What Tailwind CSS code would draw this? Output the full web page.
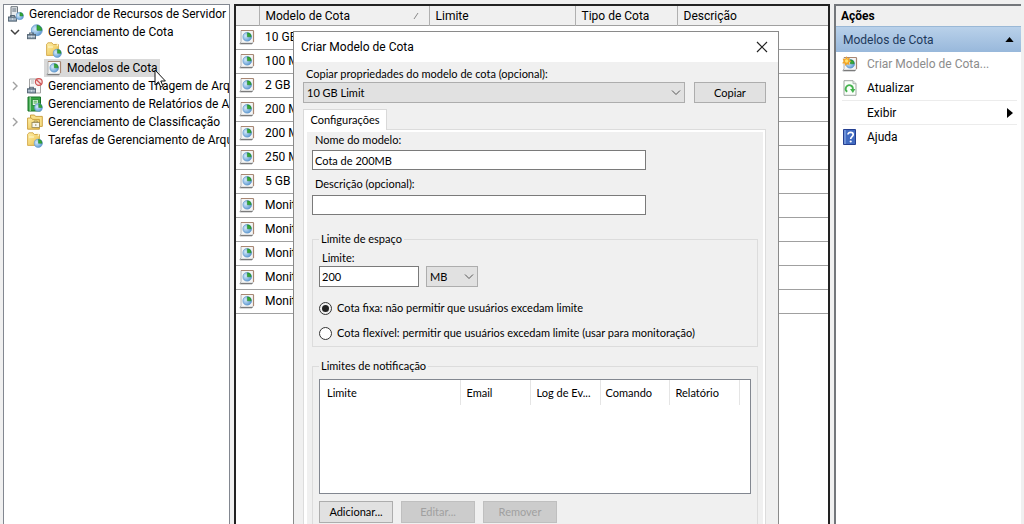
<!DOCTYPE html>
<html lang="pt-BR">
<head>
<meta charset="utf-8">
<title>Gerenciador de Recursos de Servidor de Arquivos</title>
<script src="https://cdn.jsdelivr.net/npm/@tailwindcss/browser@4"></script>
</head>
<body class="bg-[#f0f0f0] text-black">
<svg class="absolute size-0" aria-hidden="true">
  <defs>
    <linearGradient id="folderFill" x1="0" y1="0" x2="1" y2="1"><stop offset="0" stop-color="#fff0a8"/><stop offset="1" stop-color="#e9bd48"/></linearGradient>
    <radialGradient id="discFill" cx=".35" cy=".4" r=".75"><stop offset="0" stop-color="#d5eafb"/><stop offset="1" stop-color="#4d8fce"/></radialGradient>
    <symbol id="pie" viewBox="0 0 10 10">
      <circle cx="5" cy="5" r="4.4" fill="url(#discFill)" stroke="#6a9ccb" stroke-width=".7"/>
      <path d="M5.2 5V1A4 4 0 0 1 9 5Z" fill="#35a836" stroke="#1f8227" stroke-width=".5"/>
    </symbol>
    <symbol id="case" viewBox="0 0 10 8">
      <path d="M3 3V1h4v2" fill="none" stroke="#536575" stroke-width="1.2"/>
      <rect x=".5" y="2.7" width="9" height="4.8" fill="#8296a8" stroke="#50606e"/>
      <path d="M1 5h8M5 4v2" stroke="#dbe3ea" stroke-width=".9"/>
    </symbol>
    <symbol id="folder" viewBox="0 0 16 16">
      <path d="M.6 2.2 2 .8h4l1.3 1.7h5.1v10.9H.6Z" fill="url(#folderFill)" stroke="#d3a746" stroke-width=".9"/>
      <path d="M2 5h5M8.5 1.2h2.8v3" fill="none" stroke="#fff8d5"/>
    </symbol>
    <symbol id="folderPie" viewBox="0 0 16 16">
      <use href="#folder" width="16" height="16"/><use href="#pie" x="6.5" y="6.5" width="9.5" height="9.5"/>
    </symbol>
    <symbol id="template" viewBox="0 0 16 16">
      <path d="M2 1.5h12.5v11L13 15H.8L2 12.5Z" fill="#f4f5f5" stroke="#a9abad" stroke-width=".9"/>
      <path d="M2 1.5h12.5M14.5 2v11" stroke="#a98773" stroke-width="1.2"/>
      <path d="M1.5 14.4h11.8" stroke="#777" stroke-width="1.1"/>
      <use href="#pie" x="3.2" y="2.8" width="10" height="10"/>
    </symbol>
    <symbol id="server" viewBox="0 0 16 16">
      <path d="M3 .7h6.5v11H3Z" fill="#e7eaed" stroke="#6b737a"/>
      <path d="M4.3 3h4M4.3 5h4" stroke="#596675"/>
      <use href="#case" x="0" y="8.5" width="9" height="7.3"/><use href="#pie" x="7.5" y="5.5" width="8.5" height="9"/>
    </symbol>
    <symbol id="quota" viewBox="0 0 16 16">
      <use href="#pie" x="3.5" y="0" width="12.5" height="12.5"/><use href="#case" x="0" y="8" width="9" height="7.5"/>
    </symbol>
    <symbol id="screen" viewBox="0 0 16 16">
      <path d="M2.5 1h9l2 2v12h-11Z" fill="#f7f7f7" stroke="#a3a3a3"/>
      <path d="M4 5h3M4 3h3" stroke="#b7b7b7"/>
      <circle cx="11.8" cy="4" r="3.4" fill="#f8dede" stroke="#cf5555" stroke-width="1.2"/><path d="m9.4 1.7 4.8 4.6" stroke="#cf5555" stroke-width="1.2"/>
      <use href="#case" x="0" y="8.3" width="9" height="7.3"/>
    </symbol>
    <symbol id="report" viewBox="0 0 16 16">
      <path d="M1 1h12.5v14H1Z" fill="#36a644" stroke="#177127"/>
      <path d="M3.2 1v14" stroke="#b6e3b8"/><path d="M5.3 3.5h6v6h-6Z" fill="#e9f8e6" stroke="#187c29" stroke-width=".8"/>
      <path d="M6.6 5.2h3.3M6.6 7h3.3" stroke="#36a644"/>
      <use href="#pie" x="7" y="7" width="9" height="9"/>
    </symbol>
    <symbol id="classify" viewBox="0 0 16 16">
      <path d="M3.5 1h4l1 1.4h6.8v10H3.5Z" fill="#f8df88" stroke="#c79a35" stroke-width=".9"/>
      <path d="M.6 4h3.8l1 1.4h7v9.8H.6Z" fill="url(#folderFill)" stroke="#c79a35" stroke-width=".9"/>
      <rect x="5" y="8.5" width="7.5" height="5" fill="#f8f7ec" stroke="#948552" stroke-width=".8"/>
      <path d="M7 8.5V7h3.3v1.5M8.8 10v2" fill="none" stroke="#948552" stroke-width=".8"/>
    </symbol>
    <symbol id="newTemplate" viewBox="0 0 16 16">
      <use href="#template" width="16" height="16"/>
      <path d="m4.2 0 1.2 2.4L8 1.6 7.2 4l2.2 1.3L7 6.6l.5 2.5L5 8.2 3.4 10 2.7 7.6 0 7.2l1.7-2L.6 2.7l2.6.2Z" fill="#f3a526"/><circle cx="4.6" cy="5" r="1.7" fill="#ffe273"/>
    </symbol>
    <symbol id="refresh" viewBox="0 0 16 16">
      <path d="M2 .7h9l3 3v11.6H2Z" fill="#fafffa" stroke="#9da7a0"/><path d="M11 .7v3h3" fill="#e4e9e4" stroke="#9da7a0" stroke-width=".8"/>
      <path d="M5.2 11.7A3.6 3.6 0 1 1 10.8 9.5" fill="none" stroke="#45b34e" stroke-width="1.8"/><path d="M8 8.9h5.4l-2.5 4Z" fill="#45b34e"/>
    </symbol>
    <symbol id="help" viewBox="0 0 16 16">
      <path d="M1.5.5h12v15h-12Z" fill="#416bc1" stroke="#243f91"/><path d="M3 1v14" stroke="#8eade7" stroke-width="1.2"/>
      <path d="M6 5.6C6 2.6 11.2 2.7 11.2 5.6 11.2 7.8 8.7 7.6 8.7 10" fill="none" stroke="#fff" stroke-width="1.7"/><circle cx="8.7" cy="12.5" r="1.1" fill="#fff"/>
    </symbol>
  </defs>
</svg>

<div class="relative flex h-screen gap-1 overflow-hidden px-[3px] pt-1 font-[Roboto,'Noto_Sans',sans-serif] text-xs leading-[18px]">

  <nav class="w-[227px] shrink-0 overflow-hidden border border-b-0 border-[#828790] bg-white whitespace-nowrap" aria-label="Árvore do console">
    <ul>
      <li class="flex h-[18px] items-center gap-[5px] pl-1"><svg class="size-4 shrink-0"><use href="#server"/></svg><span>Gerenciador de Recursos de Servidor de Arquivos</span></li>
      <li class="flex h-[18px] items-center gap-[5px] pl-[6px]"><svg class="mr-[2px] size-[10px] shrink-0" viewBox="0 0 10 10"><path d="m1 3 4 4 4-4" fill="none" stroke="#404040" stroke-width="1.5"/></svg><svg class="size-4 shrink-0"><use href="#quota"/></svg><span>Gerenciamento de Cota</span></li>
      <li class="flex h-[18px] items-center gap-[5px] pl-[42px]"><svg class="size-4 shrink-0"><use href="#folderPie"/></svg><span>Cotas</span></li>
      <li class="flex h-[18px] pl-10"><span class="flex items-center gap-[5px] bg-[#d9d9d9] pr-[2px] pl-[2px]"><svg class="size-4 shrink-0"><use href="#template"/></svg><span>Modelos de Cota</span></span></li>
      <li class="flex h-[18px] items-center gap-[5px] pl-[6px]"><svg class="mr-[2px] size-[10px] shrink-0" viewBox="0 0 10 10"><path d="m3 1 4 4-4 4" fill="none" stroke="#a0a0a0" stroke-width="1.4"/></svg><svg class="size-4 shrink-0"><use href="#screen"/></svg><span>Gerenciamento de Triagem de Arquivo</span></li>
      <li class="flex h-[18px] items-center gap-[5px] pl-[23px]"><svg class="size-4 shrink-0"><use href="#report"/></svg><span>Gerenciamento de Relatórios de Armazenamento</span></li>
      <li class="flex h-[18px] items-center gap-[5px] pl-[6px]"><svg class="mr-[2px] size-[10px] shrink-0" viewBox="0 0 10 10"><path d="m3 1 4 4-4 4" fill="none" stroke="#a0a0a0" stroke-width="1.4"/></svg><svg class="size-4 shrink-0"><use href="#classify"/></svg><span>Gerenciamento de Classificação</span></li>
      <li class="flex h-[18px] items-center gap-[5px] pl-[23px]"><svg class="size-4 shrink-0"><use href="#folderPie"/></svg><span>Tarefas de Gerenciamento de Arquivos</span></li>
    </ul>
  </nav>

  <main class="min-w-0 flex-1 border-2 border-b-0 border-[#222] bg-white">
    <table class="w-full table-fixed border-collapse text-left whitespace-nowrap">
      <colgroup><col class="w-[23px]"><col class="w-[170px]"><col class="w-[146px]"><col class="w-[102px]"><col></colgroup>
      <thead class="bg-[#f0f0f0] leading-4">
        <tr class="h-[19px] border-b border-[#a0a0a0]">
          <th class="p-0"></th>
          <th class="border-l border-[#b0b0b0] pt-[2px] pr-0 pb-0 pl-[6px] font-normal"><span class="flex items-center justify-between pr-[10px]">Modelo de Cota <svg class="size-[6px]" viewBox="0 0 6 6"><path d="M1 6 5 0" stroke="#888" fill="none"/></svg></span></th>
          <th class="border-l border-[#b0b0b0] pt-[2px] pr-0 pb-0 pl-[6px] font-normal">Limite</th>
          <th class="border-l border-[#b0b0b0] pt-[2px] pr-0 pb-0 pl-[6px] font-normal">Tipo de Cota</th>
          <th class="border-l border-[#b0b0b0] pt-[2px] pr-0 pb-0 pl-[6px] font-normal">Descrição</th>
        </tr>
      </thead>
      <tbody>
        <tr class="h-6 border-b border-[#a0a0a0]"><td class="p-0 pl-[3px]"><svg class="size-4"><use href="#template"/></svg></td><td class="p-0 pl-[6px]" colspan="4">10 GB Limit</td></tr>
        <tr class="h-6 border-b border-[#a0a0a0]"><td class="p-0 pl-[3px]"><svg class="size-4"><use href="#template"/></svg></td><td class="p-0 pl-[6px]" colspan="4">100 MB</td></tr>
        <tr class="h-6 border-b border-[#a0a0a0]"><td class="p-0 pl-[3px]"><svg class="size-4"><use href="#template"/></svg></td><td class="p-0 pl-[6px]" colspan="4">2 GB Limit</td></tr>
        <tr class="h-6 border-b border-[#a0a0a0]"><td class="p-0 pl-[3px]"><svg class="size-4"><use href="#template"/></svg></td><td class="p-0 pl-[6px]" colspan="4">200 MB</td></tr>
        <tr class="h-6 border-b border-[#a0a0a0]"><td class="p-0 pl-[3px]"><svg class="size-4"><use href="#template"/></svg></td><td class="p-0 pl-[6px]" colspan="4">200 MB</td></tr>
        <tr class="h-6 border-b border-[#a0a0a0]"><td class="p-0 pl-[3px]"><svg class="size-4"><use href="#template"/></svg></td><td class="p-0 pl-[6px]" colspan="4">250 MB</td></tr>
        <tr class="h-6 border-b border-[#a0a0a0]"><td class="p-0 pl-[3px]"><svg class="size-4"><use href="#template"/></svg></td><td class="p-0 pl-[6px]" colspan="4">5 GB Limit</td></tr>
        <tr class="h-6 border-b border-[#a0a0a0]"><td class="p-0 pl-[3px]"><svg class="size-4"><use href="#template"/></svg></td><td class="p-0 pl-[6px]" colspan="4">Monitor</td></tr>
        <tr class="h-6 border-b border-[#a0a0a0]"><td class="p-0 pl-[3px]"><svg class="size-4"><use href="#template"/></svg></td><td class="p-0 pl-[6px]" colspan="4">Monitor</td></tr>
        <tr class="h-6 border-b border-[#a0a0a0]"><td class="p-0 pl-[3px]"><svg class="size-4"><use href="#template"/></svg></td><td class="p-0 pl-[6px]" colspan="4">Monitor</td></tr>
        <tr class="h-6 border-b border-[#a0a0a0]"><td class="p-0 pl-[3px]"><svg class="size-4"><use href="#template"/></svg></td><td class="p-0 pl-[6px]" colspan="4">Monitor</td></tr>
        <tr class="h-6 border-b border-[#a0a0a0]"><td class="p-0 pl-[3px]"><svg class="size-4"><use href="#template"/></svg></td><td class="p-0 pl-[6px]" colspan="4">Monitor</td></tr>
      </tbody>
    </table>
  </main>

  <aside class="flex w-[187px] shrink-0 flex-col border-t-2 border-l-2 border-[#74777b] bg-white">
    <h2 class="h-5 bg-[#f0f0f0] pl-[5px] leading-5 font-bold">Ações</h2>
    <button class="flex h-[26px] items-center justify-between border-t border-[#9ab8d6] bg-linear-to-b from-[#b9d1ea] to-[#98b8db] pr-[7px] pl-[7px] text-[#1e395b]">Modelos de Cota <svg class="h-[5px] w-[9px]" viewBox="0 0 10 6"><path d="M5 0 10 6H0Z"/></svg></button>
    <button class="flex h-6 items-center gap-[9px] pl-[6px] text-[#8c8c8c]" disabled><svg class="size-4"><use href="#newTemplate"/></svg>Criar Modelo de Cota...</button>
    <button class="flex h-6 items-center gap-[9px] pl-[6px]"><svg class="size-4"><use href="#refresh"/></svg>Atualizar</button>
    <button class="mr-1 ml-[6px] flex h-[25px] items-center justify-between border-y border-[#ececec] pr-1 pl-[25px]">Exibir <svg class="h-[10px] w-[6px]" viewBox="0 0 6 10"><path d="M0 0 6 5 0 10Z"/></svg></button>
    <button class="flex h-6 items-center gap-[9px] pl-[6px]"><svg class="size-4"><use href="#help"/></svg>Ajuda</button>
  </aside>

  <section role="dialog" aria-labelledby="dlgTitle" class="absolute top-[31px] bottom-0 left-[293px] flex w-[486px] flex-col border border-b-0 border-[#8a8a8a] bg-[#f0f0f0]">
    <header class="flex h-[30px] shrink-0 items-center justify-between bg-white pr-[10px] pl-[7px]">
      <h1 id="dlgTitle">Criar Modelo de Cota</h1>
      <button aria-label="Fechar"><svg class="size-3" viewBox="0 0 12 12"><path d="m1 1 10 10M11 1 1 11" stroke="#222" stroke-width="1.2"/></svg></button>
    </header>
    <form class="flex min-h-0 flex-1 flex-col px-[9px] pt-1 font-[Lato,'Liberation_Sans',sans-serif] text-[11px] leading-4">
      <label for="source" class="pl-[3px]">Copiar propriedades do modelo de cota (opcional):</label>
      <div class="flex gap-[9px] pr-[3px]">
        <div class="relative flex-1">
          <select id="source" class="block h-[21px] w-full appearance-none border border-[#adadad] bg-[#e1e1e1] pl-[3px]"><option>10 GB Limit</option></select>
          <svg class="pointer-events-none absolute top-2 right-1 h-[6px] w-[10px]" viewBox="0 0 10 6"><path d="m1 .5 4 4 4-4" fill="none" stroke="#555"/></svg>
        </div>
        <button type="button" class="h-[21px] w-[72px] border border-[#adadad] bg-[#e1e1e1]">Copiar</button>
      </div>

      <div role="tablist" class="flex pt-[6px]"><button type="button" role="tab" aria-selected="true" class="relative z-10 -mb-px h-[21px] w-[84px] border border-b-0 border-[#d9d9d9] bg-white">Configurações</button></div>
      <div role="tabpanel" class="mr-[3px] flex-1 overflow-hidden border border-b-0 border-[#dcdcdc] bg-white pt-[2px] pr-[2px] pl-[3px]">
        <div class="h-full bg-[#f0f0f0] px-[5px]">
          <div class="flex flex-col">
            <label for="name" class="pl-[3px]">Nome do modelo:</label>
            <input id="name" type="text" value="Cota de 200MB" class="mt-[2px] h-5 w-[334px] border border-[#7a7a7a] bg-white px-[2px]">
            <label for="desc" class="mt-[6px] pl-[3px]">Descrição (opcional):</label>
            <input id="desc" type="text" class="mt-[3px] h-5 w-[334px] border border-[#7a7a7a] bg-white px-[2px]">
          </div>

          <fieldset class="mt-4 h-[116px] border border-[#dcdcdc] px-[6px]">
            <legend class="px-[2px]">Limite de espaço</legend>
            <label for="limit" class="mt-[3px] block pl-[3px]">Limite:</label>
            <div class="flex gap-[7px]">
              <input id="limit" type="text" value="200" class="h-[21px] w-[100px] border border-[#7a7a7a] bg-white px-[2px]">
              <div class="relative">
                <select aria-label="Unidade" class="block h-[21px] w-[52px] appearance-none border border-[#adadad] bg-[#e1e1e1] pl-[3px]"><option>MB</option></select>
                <svg class="pointer-events-none absolute top-2 right-1 h-[6px] w-[10px]" viewBox="0 0 10 6"><path d="m1 .5 4 4 4-4" fill="none" stroke="#555"/></svg>
              </div>
            </div>
            <label class="mt-[13px] flex h-4 items-center gap-[5px]"><input type="radio" name="kind" checked class="size-[13px] appearance-none rounded-full border border-[#333] bg-white p-[2px] checked:bg-[#222] checked:bg-clip-content">Cota fixa: não permitir que usuários excedam limite</label>
            <label class="mt-[9px] flex h-4 items-center gap-[5px]"><input type="radio" name="kind" class="size-[13px] appearance-none rounded-full border border-[#333] bg-white p-[2px] checked:bg-[#222] checked:bg-clip-content">Cota flexível: permitir que usuários excedam limite (usar para monitoração)</label>
          </fieldset>

          <fieldset class="mt-[11px] h-[180px] border border-[#dcdcdc] px-[6px]">
            <legend class="px-[2px]">Limites de notificação</legend>
            <div class="mt-[5px] h-[115px] border border-[#828790] bg-white">
              <table class="w-full table-fixed border-collapse text-left">
                <colgroup><col class="w-[140px]"><col class="w-[70px]"><col class="w-[70px]"><col class="w-[69px]"><col class="w-[70px]"><col></colgroup>
                <thead><tr class="h-[25px]">
                  <th class="border-r border-[#e5e5e5] p-0 pl-[7px] font-normal">Limite</th>
                  <th class="border-r border-[#e5e5e5] p-0 pl-[6px] font-normal">Email</th>
                  <th class="border-r border-[#e5e5e5] p-0 pl-[6px] font-normal whitespace-nowrap">Log de Ev...</th>
                  <th class="border-r border-[#e5e5e5] p-0 pl-[5px] font-normal">Comando</th>
                  <th class="border-r border-[#e5e5e5] p-0 pl-[6px] font-normal">Relatório</th>
                  <th class="p-0"></th>
                </tr></thead>
              </table>
            </div>
            <div class="mt-[7px] flex gap-2">
              <button type="button" class="h-[22px] w-[74px] border border-[#adadad] bg-[#e1e1e1]">Adicionar...</button>
              <button type="button" disabled class="h-[22px] w-[74px] border border-[#bfbfbf] bg-[#cccccc] text-[#a0a0a0]">Editar...</button>
              <button type="button" disabled class="h-[22px] w-[74px] border border-[#bfbfbf] bg-[#cccccc] text-[#a0a0a0]">Remover</button>
            </div>
          </fieldset>
        </div>
      </div>
    </form>
  </section>

  <svg class="absolute top-[69px] left-[154px] h-[19px] w-3" viewBox="0 0 12 19" aria-hidden="true"><path d="M1 1v15l3.4-3.2 2.3 5.2 2.3-1-2.2-5h4.6Z" fill="#fff" stroke="#111"/></svg>
</div>
</body>
</html>
